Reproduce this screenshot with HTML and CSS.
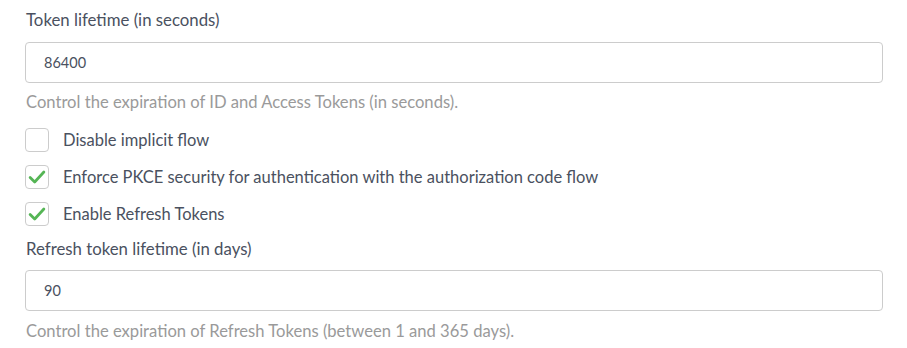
FILE: index.html
```html
<!DOCTYPE html>
<html lang="en">
<head>
  <meta charset="UTF-8">
  <title>Token settings</title>
  <link rel="stylesheet" href="styles.css">
</head>
<body>
  <div class="settings">
    <div class="field">
      <label class="field-label" for="tokenLifetime">Token lifetime (in seconds)</label>
      <input class="field-input" id="tokenLifetime" type="text" value="86400">
      <p class="field-help">Control the expiration of ID and Access Tokens (in seconds).</p>
    </div>

    <label class="check">
      <span class="check-box"></span>
      <span class="check-label">Disable implicit flow</span>
    </label>
    <label class="check">
      <span class="check-box">
        <svg viewBox="0 0 24 24"><path d="M4.5 12.5l5 5 10-11" fill="none" stroke="#55b555" stroke-width="3" stroke-linecap="round" stroke-linejoin="round"/></svg>
      </span>
      <span class="check-label">Enforce PKCE security for authentication with the authorization code flow</span>
    </label>
    <label class="check">
      <span class="check-box">
        <svg viewBox="0 0 24 24"><path d="M4.5 12.5l5 5 10-11" fill="none" stroke="#55b555" stroke-width="3" stroke-linecap="round" stroke-linejoin="round"/></svg>
      </span>
      <span class="check-label">Enable Refresh Tokens</span>
    </label>

    <div class="field field-last">
      <label class="field-label" for="refreshLifetime">Refresh token lifetime (in days)</label>
      <input class="field-input" id="refreshLifetime" type="text" value="90">
      <p class="field-help">Control the expiration of Refresh Tokens (between 1 and 365 days).</p>
    </div>
  </div>
</body>
</html>
```
FILE: styles.css
```css
* {
  margin: 0;
  padding: 0;
  box-sizing: border-box;
}

body {
  font-family: Lato, 'Open Sans', sans-serif;
  background: #ffffff;
  color: #4a5160;
}

.settings {
  width: 858px;
  margin: 9px 0 0 25px;
}

.field-label {
  display: block;
  font-size: 16.8px;
  line-height: 22px;
  margin-bottom: 11px;
  padding-left: 1px;
}

.field-last .field-label {
  margin-bottom: 10px;
}

.field-input {
  display: block;
  width: 100%;
  height: 41px;
  padding: 0 18px;
  border: 1px solid #cccccc;
  border-radius: 4px;
  font-family: inherit;
  font-size: 14.5px;
  color: #4a5160;
  outline: none;
}

.field-help {
  font-size: 16.6px;
  line-height: 20px;
  color: #9a9a9a;
  margin-top: 9px;
  margin-bottom: 16px;
  padding-left: 1px;
}

.field-last .field-help {
  margin-top: 10px;
}

.check {
  display: flex;
  align-items: center;
  gap: 14px;
  height: 24px;
  margin-bottom: 13px;
}

.check:last-of-type {
  margin-bottom: 12px;
}

.check-box {
  width: 24px;
  height: 24px;
  border: 1px solid #cccccc;
  border-radius: 4px;
  display: flex;
  align-items: center;
  justify-content: center;
}

.check-box svg {
  display: block;
  width: 22px;
  height: 22px;
}

.check-label {
  font-size: 16.5px;
  line-height: 22px;
}
```
